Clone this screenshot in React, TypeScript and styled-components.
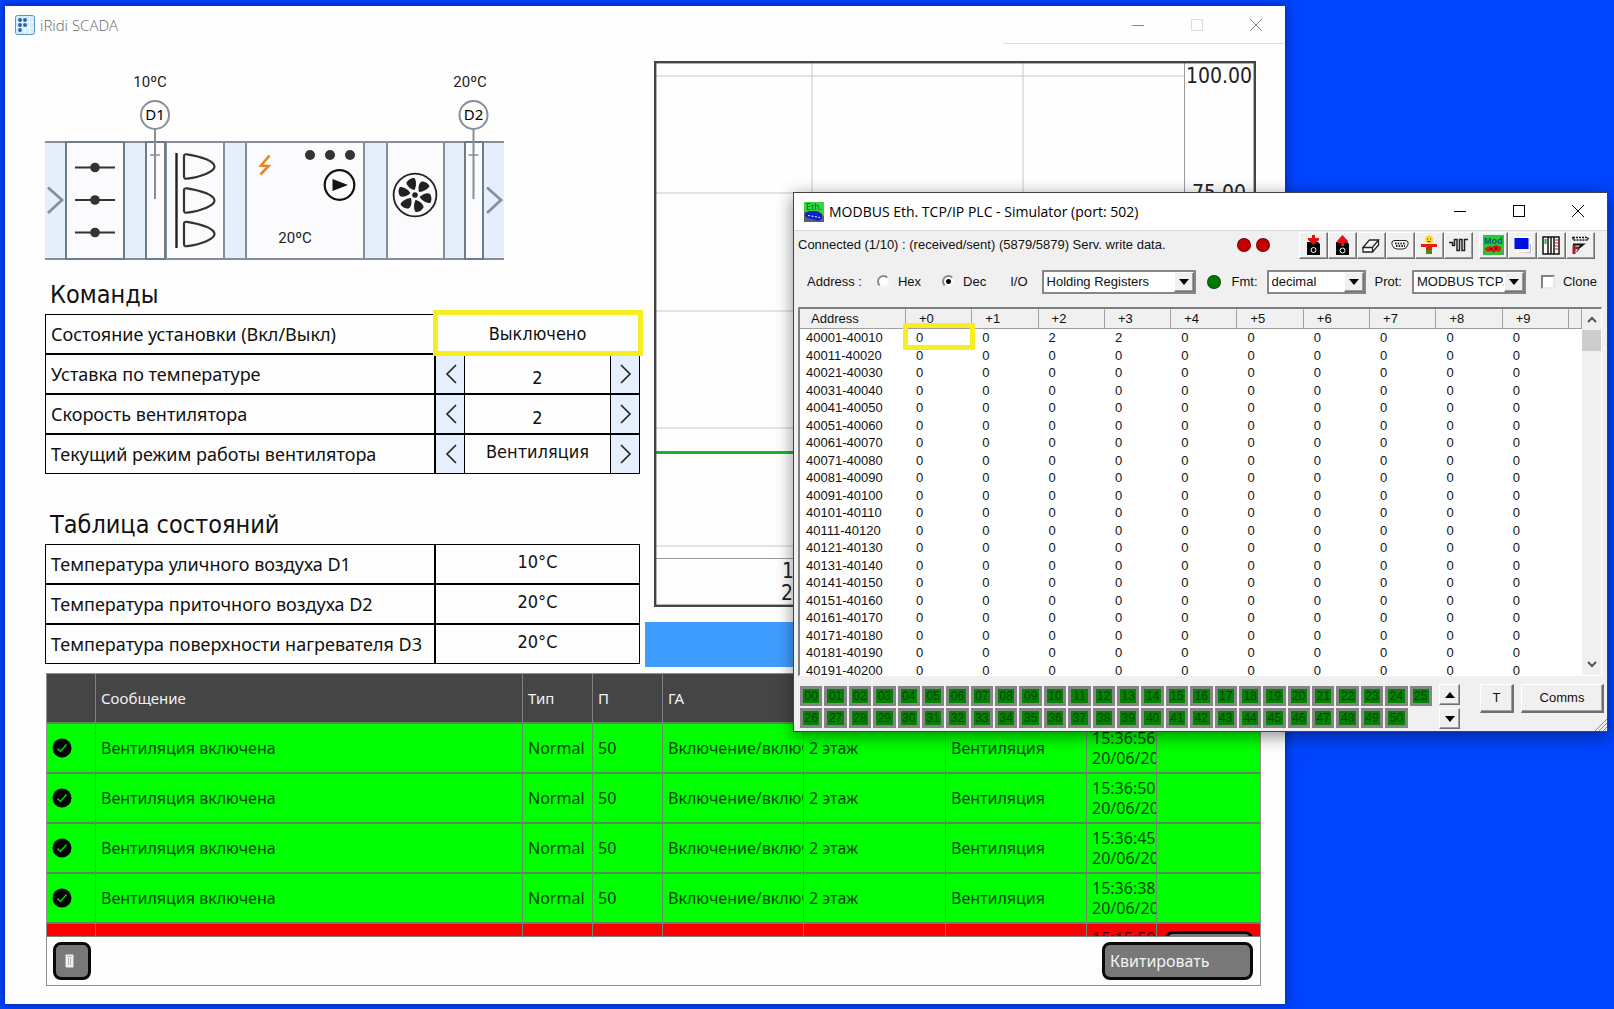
import React from "react";
import styled, { createGlobalStyle } from "styled-components";

const tahoma = '"DejaVu Sans Condensed", "Noto Sans", sans-serif';
const noto = '"Noto Sans", sans-serif';
const segoe = '"Open Sans", "Noto Sans", sans-serif';
const dialog = '"Liberation Sans", sans-serif';
const plant = "Roboto, sans-serif";

const GlobalStyle = createGlobalStyle`
  * { box-sizing: border-box; }
  html, body, #root { height: 100%; }
  body { margin: 0; background: #0044ff; overflow: hidden; }
  button, input, select { font: inherit; color: inherit; margin: 0; }
  button { padding: 0; }
`;

const Desktop = styled.main`
  position: relative;
  height: 100%;
  background: #0044ff;
  color: #111;
`;

/* ---------- SCADA window ---------- */

const ScadaWindow = styled.section`
  position: absolute;
  inset: 6px 329px 5px 5px;
  display: flex;
  flex-direction: column;
  background: #fefefe;
  font-family: ${tahoma};
  box-shadow: 0 0 10px rgba(0, 0, 40, 0.5);
`;

const TitleBar = styled.header<{ $gap: number }>`
  display: flex;
  align-items: center;
  height: 38px;
  padding-left: 10px;
  gap: ${(p) => p.$gap}px;
  font-family: ${segoe};
  flex: none;
`;

const ScadaTitle = styled.h1`
  margin: 0;
  font-size: 15px;
  font-weight: 300;
  line-height: 20px;
  color: #666;
`;

const WindowButtons = styled.div<{ $line: boolean }>`
  display: flex;
  justify-content: flex-end;
  width: 282px;
  height: 38px;
  margin-left: auto;
  border-bottom: ${(p) => (p.$line ? "1px solid #dcdcdc" : "0")};
`;

const CaptionButton = styled.button<{ $color: string }>`
  display: grid;
  place-items: center;
  width: 59px;
  height: 37px;
  border: 0;
  background: none;
  color: ${(p) => p.$color};
`;

const ScadaBody = styled.div`
  flex: 1;
  min-height: 0;
  display: flex;
  flex-direction: column;
  gap: 6px;
  padding: 0 24px 18px 40px;
`;

const TopArea = styled.div`
  display: grid;
  grid-template-columns: minmax(0, 595fr) minmax(0, 616fr);
  gap: 5px;
`;

const Column = styled.div`
  display: flex;
  flex-direction: column;
`;

const PlantDrawing = styled.svg`
  display: block;
  width: 459px;
  height: 190px;
  margin-top: 26px;
`;

const SectionTitle = styled.h2<{ $space: number }>`
  margin: ${(p) => p.$space}px 0 3px 5px;
  font-size: 25px;
  font-weight: 400;
  line-height: 32px;
`;

const ValueTable = styled.table`
  width: 100%;
  table-layout: fixed;
  border-spacing: 0;

  tr { height: 40px; }
  th, td {
    height: 40px;
    padding: 0;
    border: 1px solid #000;
    line-height: 24px;
  }
  th {
    padding-left: 5px;
    text-align: left;
    font-family: ${noto};
    font-size: 18px;
    font-weight: 400;
    white-space: nowrap;
  }
  td {
    position: relative;
    text-align: center;
    font-size: 18px;
  }
  td + td { border-left-width: 0; }
`;

const Value = styled.span<{ $shift?: "up" | "down" }>`
  display: block;
  padding: ${(p) => (p.$shift === "up" ? "0 0 4px" : p.$shift === "down" ? "8px 0 0" : "0")};
`;

const Highlight = styled.span`
  position: absolute;
  inset: -5px -4px -3px -3px;
  border: 5px solid #f6ee22;
  z-index: 1;
`;

const StepButton = styled.button`
  display: grid;
  place-items: center;
  width: 100%;
  height: 38px;
  padding-left: 2px;
  border: 0;
  background: #e5effd;
  color: #222;
`;

const ChartBox = styled.div`
  margin: 17px 5px 0 9px;
  svg { display: block; width: 100%; }
`;

const TrendButton = styled.button`
  height: 45px;
  margin-top: 15px;
  border: 0;
  background: #3f9dff;
`;

const AlarmPanel = styled.div`
  flex: 1;
  min-height: 0;
  display: flex;
  flex-direction: column;
  margin-left: 1px;
  border: 1px solid #909090;
`;

const AlarmScroll = styled.div`
  flex: 1;
  min-height: 0;
  overflow: hidden;
  border-bottom: 1px solid #808080;
`;

const AlarmTable = styled.table`
  width: 100%;
  table-layout: fixed;
  border-spacing: 0;
  font-family: ${noto};
  font-size: 16px;
  line-height: 20px;

  th, td {
    height: 50px;
    padding: 0 0 0 5px;
    text-align: left;
    font-weight: 400;
    white-space: nowrap;
    overflow: hidden;
    border-right: 1px solid #6f8a6f;
    border-bottom: 2px solid #5a8a5a;
  }
  th {
    font-size: 15px;
    color: #f2f2f2;
    background: #454545;
    border-right-color: #808080;
  }
  th:last-child, td:last-child { border-right: 0; }
`;

const AlarmRow = styled.tr<{ $active: boolean }>`
  background: ${(p) => (p.$active ? "#fb0000" : "#00ff00")};
  color: ${(p) => (p.$active ? "#3a0000" : "#004400")};
`;

const TopLine = styled.div`
  height: 40px;
`;

const AlarmFooter = styled.div`
  display: flex;
  justify-content: space-between;
  align-items: center;
  height: 48px;
  padding: 0 7px 0 6px;
`;

const GreyButton = styled.button<{ $width: number }>`
  display: flex;
  align-items: center;
  width: ${(p) => p.$width}px;
  height: 38px;
  padding-left: ${(p) => (p.$width > 80 ? 5 : 9)}px;
  border: 3px solid #0a0a0a;
  border-radius: 8px;
  background: #787878;
  color: #f2f2f2;
  font-family: ${noto};
  font-size: 16px;
`;

const RowButton = styled(GreyButton)`
  margin: 4px 0 0 3px;
`;

/* ---------- Simulator window ---------- */

const SimWindow = styled.section`
  position: absolute;
  inset: 192px 6px 277px 793px;
  display: flex;
  flex-direction: column;
  background: #f0f0f0;
  border: 1px solid #444;
  font-family: ${dialog};
  font-size: 13px;
  line-height: 16px;
  box-shadow: 0 4px 16px rgba(0, 0, 0, 0.45);
`;

const SimTitleBar = styled(TitleBar)`
  background: #fff;
  border-bottom: 1px solid #d8d8d8;
`;

const SimTitle = styled.h1`
  margin: 0;
  font-size: 14px;
  font-weight: 400;
  color: #000;
`;

const StatusLine = styled.div`
  display: flex;
  align-items: center;
  height: 28px;
  padding: 0 12px 0 4px;
`;

const StatusLights = styled.div`
  display: flex;
  gap: 5px;
  margin: 0 23px 0 auto;
`;

const Light = styled.span<{ $color: string }>`
  width: 14px;
  height: 14px;
  border-radius: 50%;
  border: 1px solid rgba(0, 0, 0, 0.4);
  background: ${(p) => p.$color};
`;

const ToolGroup = styled.div`
  display: flex;
  margin-left: 6px;
`;

const raised = `
  border: 1px solid;
  border-color: #fff #707070 #707070 #fff;
  box-shadow: inset -1px -1px 0 #a0a0a0;
  background: #f0f0f0;
`;

const ToolButton = styled.button`
  ${raised}
  display: grid;
  place-items: center;
  width: 29px;
  height: 27px;
`;

const OptionLine = styled.div`
  display: flex;
  align-items: center;
  height: 45px;
  padding: 0 10px 0 13px;
`;

const OptionText = styled.span<{ $left?: number; $right?: number }>`
  margin: 0 ${(p) => p.$right ?? 0}px 0 ${(p) => p.$left ?? 0}px;
`;

const Choice = styled.label<{ $left: number }>`
  display: flex;
  align-items: center;
  gap: 8px;
  margin-left: ${(p) => p.$left}px;
`;

const Radio = styled.input`
  appearance: none;
  width: 13px;
  height: 13px;
  border-radius: 50%;
  border: 2px solid;
  border-color: #888 #f4f4f4 #f4f4f4 #888;
  background: #fff;
  &:checked { background: radial-gradient(circle, #000 0 2px, #fff 3px); }
`;

const Tick = styled.input`
  appearance: none;
  width: 14px;
  height: 14px;
  border: 2px solid;
  border-color: #808080 #e8e8e8 #e8e8e8 #808080;
  background: #fff;
`;

const SelectFrame = styled.span<{ $grow: number; $left: number }>`
  position: relative;
  display: flex;
  flex: 0 1 ${(p) => p.$grow}px;
  height: 24px;
  margin-left: ${(p) => p.$left}px;
  border: 2px solid #868686;
  background: #fff;
`;

const Select = styled.select`
  appearance: none;
  width: 100%;
  padding: 0 20px 0 3px;
  border: 0;
  background: #fff;
`;

const SelectArrow = styled.span`
  ${raised}
  position: absolute;
  inset: 0 0 0 auto;
  width: 20px;
  display: grid;
  place-items: center;
  pointer-events: none;
`;

const GridFrame = styled.div`
  flex: 1;
  min-height: 0;
  display: flex;
  margin: 3px 5px 0 4px;
  border-top: 2px solid #808080;
  border-left: 2px solid #808080;
  border-right: 1px solid #fff;
  border-bottom: 1px solid #fff;
  background: #fff;
`;

const GridScroll = styled.div`
  flex: 1;
  min-width: 0;
  overflow: hidden;
`;

const RegisterTable = styled.table`
  width: 100%;
  table-layout: fixed;
  border-spacing: 0;

  th {
    height: 20px;
    padding: 1px 0 0 13px;
    background: #f0f0f0;
    border-right: 1px solid #a0a0a0;
    border-bottom: 1px solid #a0a0a0;
    text-align: left;
    font-weight: 400;
  }
  th:first-child { padding-left: 11px; }
  tr { height: 18px; }
  tbody tr:nth-child(odd) { height: 17px; }
  td {
    position: relative;
    padding: 0 0 0 10px;
    line-height: 17px;
  }
  td:first-child { padding-left: 6px; white-space: nowrap; }
`;

const CellMark = styled.span`
  position: absolute;
  inset: -6px -3px -4px -3px;
  border: 5px solid #f6ee22;
  z-index: 1;
`;

const ScrollBar = styled.div`
  display: flex;
  flex-direction: column;
  justify-content: space-between;
  width: 19px;
  background: #f0f0f0;
`;

const ScrollButton = styled.button`
  display: grid;
  place-items: center;
  height: 21px;
  border: 0;
  background: none;
`;

const ScrollThumb = styled.div`
  height: 21px;
  margin-bottom: auto;
  background: #cdcdcd;
`;

const BottomBar = styled.footer`
  position: relative;
  display: flex;
  align-items: flex-start;
  height: 55px;
  padding: 8px 3px 0 6px;
`;

const BitGrid = styled.div`
  display: grid;
  grid-template-columns: repeat(26, 1fr);
  gap: 2px;
  flex: 0 1 632px;
  padding-top: 2px;
`;

const BitButton = styled.button`
  height: 20px;
  border: 3px solid #858585;
  background: #088008;
  color: #004800;
  font-size: 12px;
  line-height: 14px;
`;

const Spinner = styled.div`
  display: grid;
  gap: 3px;
  margin-left: auto;
`;

const SpinButton = styled.button`
  ${raised}
  display: grid;
  place-items: center;
  width: 21px;
  height: 21px;
`;

const PushButton = styled.button<{ $width: number; $left: number }>`
  ${raised}
  border-width: 1px 2px 2px 1px;
  width: ${(p) => p.$width}px;
  height: 29px;
  margin-left: ${(p) => p.$left}px;
`;

const Grip = styled.svg`
  position: absolute;
  right: 0;
  bottom: 0;
`;

/* ---------- Drawings ---------- */

const Sensor = ({ x, name }: { x: number; name: string }) => (
  <g>
    <line x1={x} y1={129} x2={x} y2={199} stroke="#848f99" strokeWidth={2} />
    <line x1={x - 5} y1={155} x2={x + 5} y2={155} stroke="#848f99" strokeWidth={1.5} />
    <circle cx={x} cy={115} r={14} fill="#fefefe" stroke="#848f99" strokeWidth={2} />
    <text x={x} y={120} textAnchor="middle" fontSize={15} fontFamily={noto}>{name}</text>
  </g>
);

const Plant = () => (
  <PlantDrawing viewBox="45 70 459 190" role="img" aria-label="Вентиляционная установка">
    <rect x={45} y={142} width={459} height={117} fill="#e5effb" />
    <g fill="#fbfafd" stroke="#848f99" strokeWidth={2}>
      <rect x={166} y={142} width={58} height={117} />
      <rect x={246} y={142} width={118} height={117} />
      <rect x={387} y={142} width={57} height={117} />
      <path d="M45 142H504M45 259H504" />
      <g stroke="#6f7b86">
        <rect x={66} y={142} width={58} height={117} />
        <rect x={146} y={142} width={19} height={117} />
        <rect x={465} y={142} width={18} height={117} />
      </g>
    </g>
    <g fill="none" stroke="#85909b" strokeWidth={2.8}>
      <path d="M48 187.5L62 200L48 213" />
      <path d="M487 187.5L501 200L487 213" />
    </g>
    {[167.5, 200, 232.5].map((y) => (
      <g key={y}>
        <line x1={75} x2={115} y1={y} y2={y} stroke="#333" strokeWidth={2} />
        <circle cx={95} cy={y} r={4.8} fill="#333" />
      </g>
    ))}
    <line x1={176.5} x2={176.5} y1={153} y2={248} stroke="#222" strokeWidth={2.4} />
    {[166.5, 200.5, 234].map((y) => (
      <path
        key={y}
        transform={`translate(184 ${y})`}
        d="M0 -10Q0 -12.5 3 -12.2C18 -10 30.500 -5 30.500 0S18 10 3 12.200Q0 12.500 0 10Z"
        fill="none"
        stroke="#333"
        strokeWidth={2.2}
      />
    ))}
    <path d="M269.500 155.500L261 165.500L268.500 166L260.500 174.500" fill="none" stroke="#e98322" strokeWidth={2.6} />
    {[310, 330, 350].map((x) => <circle key={x} cx={x} cy={155} r={5} fill="#333" />)}
    <circle cx={339.5} cy={185} r={14.8} fill="none" stroke="#111" strokeWidth={2.2} />
    <path d="M332.500 179L348 185L332.500 191Z" fill="#111" />
    <circle cx={415} cy={195} r={21.4} fill="none" stroke="#222" strokeWidth={1.8} />
    <circle cx={415} cy={195} r={2.8} fill="#222" />
    {[0, 60, 120, 180, 240, 300].map((a) => (
      <path key={a} transform={`translate(415 195) rotate(${a})`} d="M-0.500 -5C-4 -5.500 -9 -9.500 -8.500 -12.500C-6.500 -16 -3 -17.500 -0.500 -17C1.500 -14 1.500 -9 -0.500 -5Z" fill="#222" />
    ))}
    <Sensor x={155} name="D1" />
    <Sensor x={473.5} name="D2" />
    <g fontFamily={plant} fontSize={15} fill="#222" textAnchor="middle">
      <text x={150} y={87}>10ºC</text>
      <text x={470} y={87}>20ºC</text>
      <text x={295} y={243}>20ºC</text>
    </g>
  </PlantDrawing>
);

const Trend = () => (
  <ChartBox>
    <svg viewBox="0 0 602 546" role="img" aria-label="График">
      <path d="M0 15H530M0 132H530M0 250H530M0 367H530M0 485H530M158 0V497M369 0V497" stroke="#c8c8c8" fill="none" />
      <path d="M530.500 0V545M0 497.500H602" stroke="#9a9a9a" fill="none" />
      <path d="M0 391.500H530" stroke="#18b52c" strokeWidth={3} />
      <rect x={1.2} y={1.2} width={599.6} height={543.6} fill="none" stroke="#444" strokeWidth={2.4} />
      <g fontFamily={tahoma} fontSize={21} fill="#222">
        <text x={565} y={22} textAnchor="middle">100.00</text>
        <text x={565} y={139} textAnchor="middle">75.00</text>
        <text x={128} y={517}>15:36</text>
        <text x={127} y={539}>20/06</text>
      </g>
    </svg>
  </ChartBox>
);

const Caption = ({ color, maxColor, line = false }: { color: string; maxColor: string; line?: boolean }) => (
  <WindowButtons $line={line}>
    <CaptionButton $color={color} aria-label="Minimize">
      <svg width="12" height="12"><path d="M0 6.500H12" stroke="currentColor" /></svg>
    </CaptionButton>
    <CaptionButton $color={maxColor} aria-label="Maximize">
      <svg width="12" height="12"><rect x="0.5" y="0.5" width="11" height="11" fill="none" stroke="currentColor" /></svg>
    </CaptionButton>
    <CaptionButton $color={color} aria-label="Close">
      <svg width="12" height="12"><path d="M0 0L12 12M12 0L0 12" stroke="currentColor" /></svg>
    </CaptionButton>
  </WindowButtons>
);

const Chevron = ({ left }: { left?: boolean }) => (
  <svg width="12" height="20">
    <path d={left ? "M11 1L2 10L11 19" : "M1 1L10 10L1 19"} fill="none" stroke="currentColor" strokeWidth="1.6" />
  </svg>
);

const Triangle = ({ up }: { up?: boolean }) => (
  <svg width="10" height="6"><path d={up ? "M0 6L5 0L10 6Z" : "M0 0L5 6L10 0Z"} fill="#000" /></svg>
);

const toolIcons: Record<string, React.ReactNode> = {
  "Load": (
    <>
      <path d="M4 7H15L17 9V20H4Z" fill="#000" />
      <path d="M9 0H12V3H16V5L10.500 10L5 5V3H9Z" fill="#e81010" />
      <circle cx="10.500" cy="15" r="2.500" fill="none" stroke="#fff" />
    </>
  ),
  "Save": (
    <>
      <path d="M4 7H15L17 9V20H4Z" fill="#000" />
      <path d="M9 11H12V8H16V6L10.500 0L5 6V8H9Z" fill="#e81010" />
      <circle cx="10.500" cy="15.500" r="2.500" fill="none" stroke="#fff" />
    </>
  ),
  "Erase": (
    <path d="M2 12.500L8.500 5H17.500L11.500 12.500ZM2 12.500V17H11.500L17.500 10V5M11.500 12.500V17" fill="#fff" stroke="#222" strokeWidth="1.300" />
  ),
  "Port": (
    <>
      <path d="M4 5.500H16Q19 6 18 9.500Q16.500 14 13 14H7Q3.500 14 2 9.500Q1 6 4 5.500Z" fill="#fff" stroke="#222" />
      <path d="M5 8.500H16M6 11H15" stroke="#222" strokeWidth="1.800" strokeDasharray="1.500 1.200" />
    </>
  ),
  "User": (
    <>
      <circle cx="10" cy="4.500" r="4" fill="#ffd62a" />
      <path d="M8 4H9M11 4H12M8.500 6.500H11.500" stroke="#803000" />
      <path d="M2 9H18V12H13V15H7V12H2Z" fill="#e52010" />
      <rect x="7" y="15" width="6" height="4" fill="#4b8a10" />
    </>
  ),
  "Pulse": <path d="M1 7.500H4.500V10.500H6.500V4.500H9V15.500H11.500V4.500H14V15.500H16.500V4.500H20" fill="none" stroke="#222" strokeWidth="1.500" />,
  "About": (
    <>
      <rect width="21" height="20" fill="#27cc35" />
      <path d="M0 14L4 19H0ZM17 20L21 15V20Z" fill="#7a807a" />
      <path d="M2 13L7 11L9 12L13 10L18 12V15L16 17L13 16L11 18L8 16L5 17L2 15Z" fill="#e01818" />
      <path d="M8 13V15M13 12V15" stroke="#5a0808" strokeWidth="1.500" />
      <text x="1" y="9" fontSize="9" fontWeight="700" fill="#005a80">Mod</text>
    </>
  ),
  "Monitor": (
    <>
      <path d="M2 2H17L19 4V17H8" fill="none" stroke="#fff" strokeWidth="2" />
      <path d="M18.500 9V17.500H7" fill="none" stroke="#bbb" />
      <rect x="2.500" y="3" width="14" height="11" fill="#0010e0" />
      <path d="M3 16.500H14" stroke="#fff" strokeWidth="2" />
    </>
  ),
  "Registers": (
    <>
      <rect x="2" y="2" width="16" height="17" fill="#fff" stroke="#111" strokeWidth="1.500" />
      <path d="M7 2V19M10 2V19M13 2V19" stroke="#111" strokeWidth="1.500" />
      <path d="M4.500 4V9" stroke="#1fae30" strokeWidth="2" />
      <path d="M14 5H17.500M14 8H17.500M14 11H17.500M14 14H17.500" stroke="#d01818" />
    </>
  ),
  "Script": (
    <>
      <path d="M3 2.500H18V5H3Z" fill="#fff" stroke="#111" strokeWidth="1.500" strokeDasharray="2 1" />
      <path d="M3 9.500H13L8 13.500" fill="none" stroke="#111" strokeWidth="2" />
      <path d="M4 10V19M4 13H8" stroke="#b01828" strokeWidth="3" />
      <path d="M6.500 17L9 14" stroke="#111" />
    </>
  ),
};

const Tool = ({ name }: { name: string }) => (
  <ToolButton aria-label={name}>
    <svg width="21" height="20">{toolIcons[name]}</svg>
  </ToolButton>
);

const ArrowSelect = ({ label, value, grow, left }: { label: string; value: string; grow: number; left: number }) => (
  <SelectFrame $grow={grow} $left={left}>
    <Select aria-label={label} defaultValue={value}>
      <option>{value}</option>
    </Select>
    <SelectArrow><Triangle /></SelectArrow>
  </SelectFrame>
);

/* ---------- Data ---------- */

const commands: [string, string, "up" | "down"][] = [
  ["Уставка по температуре", "2", "down"],
  ["Скорость вентилятора", "2", "down"],
  ["Текущий режим работы вентилятора", "Вентиляция", "up"],
];

const states = [
  ["Температура уличного воздуха D1", "10°C"],
  ["Температура приточного воздуха D2", "20°C"],
  ["Температура поверхности нагревателя D3", "20°C"],
];

const alarmTimes = ["15:36:56", "15:36:50", "15:36:45", "15:36:38"];

const registers = Array.from({ length: 20 }, (_, row) => ({
  range: `${40001 + row * 10}-${40010 + row * 10}`,
  values: Array.from({ length: 10 }, (_, i) => (row === 0 && (i === 2 || i === 3) ? 2 : 0)),
}));

const bits = Array.from({ length: 51 }, (_, i) => String(i).padStart(2, "0"));

/* ---------- Windows ---------- */

const Scada = () => (
  <ScadaWindow>
    <TitleBar $gap={5}>
      <svg width="20" height="20">
        <rect x="0.500" y="0.500" width="19" height="19" rx="2" fill="#d6ebfa" stroke="#5c93c4" />
        <path d="M10 1V19M14.500 1V19M1 7H19M1 13H19" stroke="#f4fbff" />
        {[[5, 5], [10, 5], [5, 10], [10, 10], [5, 15]].map(([x, y]) => (
          <circle key={`${x}-${y}`} cx={x} cy={y} r="1.900" fill="#1766b5" />
        ))}
      </svg>
      <ScadaTitle>iRidi SCADA</ScadaTitle>
      <Caption color="#888" maxColor="#ddd" line />
    </TitleBar>
    <ScadaBody>
      <TopArea>
        <Column>
          <Plant />
          <SectionTitle $space={19}>Команды</SectionTitle>
          <ValueTable>
            <colgroup>
              <col />
              <col style={{ width: 30 }} />
              <col style={{ width: 146 }} />
              <col style={{ width: 29 }} />
            </colgroup>
            <tbody>
              <tr>
                <th scope="row">Состояние установки (Вкл/Выкл)</th>
                <td colSpan={3}><Value>Выключено</Value><Highlight /></td>
              </tr>
              {commands.map(([name, value, shift]) => (
                <tr key={name}>
                  <th scope="row">{name}</th>
                  <td><StepButton aria-label="Предыдущее"><Chevron left /></StepButton></td>
                  <td><Value $shift={shift}>{value}</Value></td>
                  <td><StepButton aria-label="Следующее"><Chevron /></StepButton></td>
                </tr>
              ))}
            </tbody>
          </ValueTable>
          <SectionTitle $space={35}>Таблица состояний</SectionTitle>
          <ValueTable>
            <colgroup>
              <col />
              <col style={{ width: 205 }} />
            </colgroup>
            <tbody>
              {states.map(([name, value]) => (
                <tr key={name}>
                  <th scope="row">{name}</th>
                  <td><Value $shift="up">{value}</Value></td>
                </tr>
              ))}
            </tbody>
          </ValueTable>
        </Column>
        <Column>
          <Trend />
          <TrendButton aria-label="Тренд" />
        </Column>
      </TopArea>
      <AlarmPanel>
        <AlarmScroll>
          <AlarmTable>
            <colgroup>
              <col style={{ width: 49 }} />
              <col />
              <col style={{ width: 70 }} />
              <col style={{ width: 70 }} />
              <col style={{ width: 141 }} />
              <col style={{ width: 142 }} />
              <col style={{ width: 141 }} />
              <col style={{ width: 70 }} />
              <col style={{ width: 103 }} />
            </colgroup>
            <thead>
              <tr>
                <th /><th>Сообщение</th><th>Тип</th><th>П</th><th>ГА</th><th /><th /><th /><th />
              </tr>
            </thead>
            <tbody>
              {alarmTimes.map((time) => (
                <AlarmRow key={time} $active={false}>
                  <td>
                    <svg width="20" height="20" display="block">
                      <circle cx="10" cy="10" r="9.500" fill="#000" />
                      <path d="M5.500 10.500L8.500 13.500L14.500 6.500" fill="none" stroke="#00d800" strokeWidth="1.500" />
                    </svg>
                  </td>
                  <td>Вентиляция включена</td>
                  <td>Normal</td>
                  <td>50</td>
                  <td>Включение/включ</td>
                  <td>2 этаж</td>
                  <td>Вентиляция</td>
                  <td>{time}<br />20/06/20</td>
                  <td />
                </AlarmRow>
              ))}
              <AlarmRow $active>
                <td /><td /><td /><td /><td /><td /><td />
                <td><TopLine>15:15:50</TopLine></td>
                <td><RowButton $width={88} aria-label="Квитировать строку" /></td>
              </AlarmRow>
            </tbody>
          </AlarmTable>
        </AlarmScroll>
        <AlarmFooter>
          <GreyButton $width={38} aria-label="Удалить">
            <svg width="10" height="14">
              <path d="M1 1H8V13H1Z" fill="#eee" stroke="#eee" />
              <path d="M3.500 4V11M5.500 4V11M2 2.500H7" stroke="#bbb" />
            </svg>
          </GreyButton>
          <GreyButton $width={151}>Квитировать</GreyButton>
        </AlarmFooter>
      </AlarmPanel>
    </ScadaBody>
  </ScadaWindow>
);

const Simulator = () => (
  <SimWindow>
    <SimTitleBar $gap={5}>
      <svg width="20" height="20">
        <rect width="20" height="20" fill="#35d83b" />
        <path d="M0 10L8 9L20 14V20H0Z" fill="#55606a" />
        <path d="M1 12L5 9H13L18 12V16L15 19L4 16L1 14Z" fill="#0b1fd0" />
        <path d="M4 13.500L16 15.500" stroke="#fff" strokeDasharray="2 1.500" />
        <text x="2" y="8" fontSize="9" fill="#063">Eth.</text>
      </svg>
      <SimTitle>MODBUS Eth. TCP/IP PLC - Simulator (port: 502)</SimTitle>
      <Caption color="#000" maxColor="#000" />
    </SimTitleBar>
    <StatusLine>
      <span>Connected (1/10) : (received/sent) (5879/5879) Serv. write data.</span>
      <StatusLights>
        <Light $color="#c40000" />
        <Light $color="#c40000" />
      </StatusLights>
      <ToolGroup>
        {["Load", "Save", "Erase", "Port", "User", "Pulse"].map((n) => <Tool key={n} name={n} />)}
      </ToolGroup>
      <ToolGroup>
        {["About", "Monitor", "Registers", "Script"].map((n) => <Tool key={n} name={n} />)}
      </ToolGroup>
    </StatusLine>
    <OptionLine>
      <OptionText>Address :</OptionText>
      <Choice $left={15}><Radio type="radio" name="base" />Hex</Choice>
      <Choice $left={21}><Radio type="radio" name="base" defaultChecked />Dec</Choice>
      <OptionText $left={24}>I/O</OptionText>
      <ArrowSelect label="I/O" value="Holding Registers" grow={154} left={14} />
      <OptionText $left={11} />
      <Light $color="#007a00" />
      <OptionText $left={11}>Fmt:</OptionText>
      <ArrowSelect label="Fmt" value="decimal" grow={99} left={9} />
      <OptionText $left={9}>Prot:</OptionText>
      <ArrowSelect label="Prot" value="MODBUS TCP/IP" grow={114} left={10} />
      <Choice $left={15}><Tick type="checkbox" />Clone</Choice>
    </OptionLine>
    <GridFrame>
      <GridScroll>
        <RegisterTable>
          <colgroup>
            <col style={{ width: 106 }} />
            {registers[0].values.map((_, i) => <col key={i} />)}
            <col style={{ width: 13 }} />
          </colgroup>
          <thead>
            <tr>
              <th>Address</th>
              {registers[0].values.map((_, i) => <th key={i}>+{i}</th>)}
              <th />
            </tr>
          </thead>
          <tbody>
            {registers.map((r, row) => (
              <tr key={r.range}>
                <td>{r.range}</td>
                {r.values.map((v, i) => (
                  <td key={i}>{v}{row === 0 && i === 0 && <CellMark />}</td>
                ))}
                <td />
              </tr>
            ))}
          </tbody>
        </RegisterTable>
      </GridScroll>
      <ScrollBar>
        <ScrollButton aria-label="Up">
          <svg width="10" height="7"><path d="M1 6L5 2L9 6" fill="none" stroke="#555" strokeWidth="2" /></svg>
        </ScrollButton>
        <ScrollThumb />
        <ScrollButton aria-label="Down">
          <svg width="10" height="7"><path d="M1 1L5 5L9 1" fill="none" stroke="#555" strokeWidth="2" /></svg>
        </ScrollButton>
      </ScrollBar>
    </GridFrame>
    <BottomBar>
      <BitGrid>
        {bits.map((b) => <BitButton key={b}>{b}</BitButton>)}
      </BitGrid>
      <Spinner>
        <SpinButton aria-label="Previous"><Triangle up /></SpinButton>
        <SpinButton aria-label="Next"><Triangle /></SpinButton>
      </Spinner>
      <PushButton $width={34} $left={20}>T</PushButton>
      <PushButton $width={83} $left={7}>Comms</PushButton>
      <Grip width="13" height="13"><path d="M1 13L13 1M5 13L13 5M9 13L13 9" stroke="#888" /></Grip>
    </BottomBar>
  </SimWindow>
);

export default function App() {
  return (
    <Desktop>
      <GlobalStyle />
      <Scada />
      <Simulator />
    </Desktop>
  );
}
